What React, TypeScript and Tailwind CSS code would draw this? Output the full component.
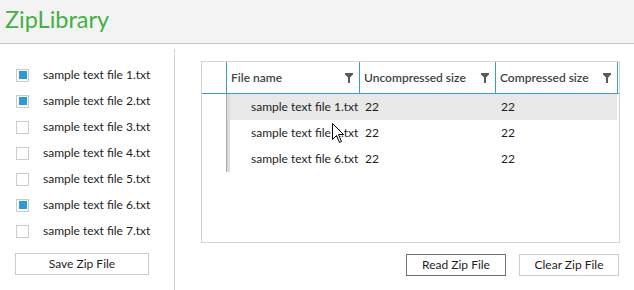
import React from "react";

const files = [
  { name: "sample text file 1.txt", checked: true },
  { name: "sample text file 2.txt", checked: true },
  { name: "sample text file 3.txt", checked: false },
  { name: "sample text file 4.txt", checked: false },
  { name: "sample text file 5.txt", checked: false },
  { name: "sample text file 6.txt", checked: true },
  { name: "sample text file 7.txt", checked: false },
];

const rows = [
  { name: "sample text file 1.txt", u: "22", c: "22", sel: true },
  { name: "sample text file 2.txt", u: "22", c: "22", sel: false },
  { name: "sample text file 6.txt", u: "22", c: "22", sel: false },
];

function Funnel() {
  return (
    <svg width="8" height="10" viewBox="0 0 8 10" className="shrink-0">
      <path d="M0 0 H8 V1.5 L5 4.5 V10 H3 V4.5 L0 1.5 Z" fill="#5a5a5a" />
    </svg>
  );
}

function HeaderCell({ label, w }: { label: string; w: string }) {
  return (
    <div className={`${w} h-full flex items-center justify-between pl-[4px] pr-[6px] border-r border-[#3d9ad6]`}>
      <span className="font-semibold text-[#444444]">{label}</span>
      <Funnel />
    </div>
  );
}

export default function App() {
  return (
    <div
      className="relative w-[634px] h-[290px] bg-white overflow-hidden text-[12px] text-[#1e1e1e]"
      style={{ fontFamily: "Lato, 'Open Sans', sans-serif" }}
    >
      <div className="h-[44px] bg-[#f3f3f3] border-b border-[#c8c8c8] flex items-center pl-[5px]">
        <span className="text-[23.5px] leading-none text-[#44b048] pb-[3px]">ZipLibrary</span>
      </div>
      <div className="flex mt-[5px] h-[241px]">
        <div className="w-[175px] border-r border-[#d2d2d2] pt-[13px] pl-[15px] flex flex-col">
          {files.map((f) => (
            <div key={f.name} className="h-[26px] flex items-center">
              <div className="ml-[1px] w-[13px] h-[13px] border border-[#cccccc] flex items-center justify-center">
                {f.checked && <div className="w-[8px] h-[8px] bg-[#2a9bd8]" />}
              </div>
              <span className="ml-[14px]">{f.name}</span>
            </div>
          ))}
          <button className="mt-[9px] w-[134px] h-[22px] border border-[#cccccc] bg-white flex items-center justify-center">
            Save Zip File
          </button>
        </div>
        <div className="flex-1 pl-[26px] pt-[12px] flex flex-col">
          <div className="w-[419px] h-[182px] border border-[#d5d5d5] flex flex-col">
            <div className="h-[32px] flex border-b border-[#3d9ad6]">
              <div className="w-[25px] h-full border-r border-[#3d9ad6]" />
              <HeaderCell label="File name" w="w-[133px]" />
              <HeaderCell label="Uncompressed size" w="w-[136px]" />
              <HeaderCell label="Compressed size" w="w-[122px]" />
            </div>
            <div className="flex">
              <div className="w-[24px]" />
              <div className="w-[1px] bg-[#a8a8a8]" />
              <div className="w-[3px] bg-[#dcdcdc]" />
              <div className="flex flex-col">
                {rows.map((r) => (
                  <div key={r.name} className={`h-[26px] flex items-center w-[387px] ${r.sel ? "bg-[#e8e8e8]" : ""}`}>
                    <div className="w-[129px] pl-[21px]">{r.name}</div>
                    <div className="w-[136px] pl-[6px]">{r.u}</div>
                    <div className="w-[122px] pl-[6px]">{r.c}</div>
                  </div>
                ))}
              </div>
            </div>
          </div>
          <div className="flex justify-end gap-[13px] w-[418px] mt-[11px]">
            <button className="w-[100px] h-[22px] border border-[#707070] bg-white flex items-center justify-center">
              Read Zip File
            </button>
            <button className="w-[100px] h-[22px] border border-[#cccccc] bg-white flex items-center justify-center">
              Clear Zip File
            </button>
          </div>
        </div>
      </div>
      <svg className="absolute left-[332px] top-[123px]" width="13" height="21" viewBox="0 0 13 21">
        <path d="M0.5 0.5 L0.5 16.5 L4.5 12.5 L7.5 19.5 L9.5 18.5 L6.5 11.5 L11.5 11.5 Z" fill="white" stroke="black" strokeWidth="1" strokeLinejoin="miter" />
      </svg>
    </div>
  );
}
